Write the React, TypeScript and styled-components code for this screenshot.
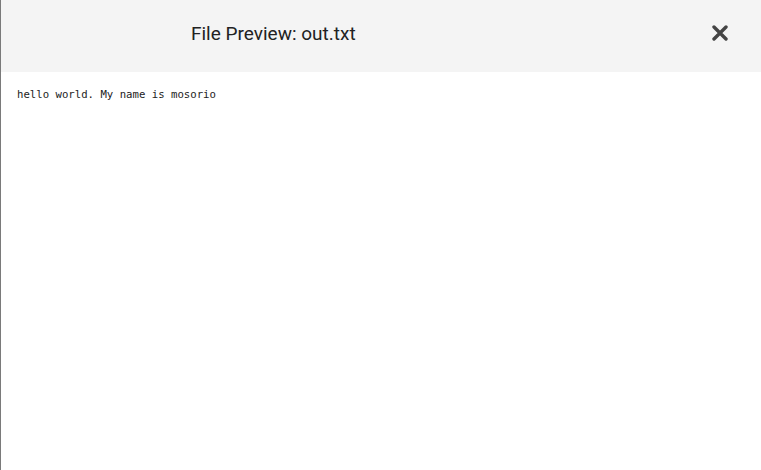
import React from 'react'
import styled, { createGlobalStyle } from 'styled-components'

const GlobalStyle = createGlobalStyle`
    html, body {
        margin: 0;
        padding: 0;
        background: white;
    }
`;

const Wrapper = styled.div`
    display: flex;
    flex-direction: column;
    height: 470px;
    width: 100%;
    box-sizing: border-box;
    border-left: 1px solid #7a7a7a;
    background: white;
`;

const Header = styled.div`
    display: flex;
    flex-direction: row;
    align-items: center;
    justify-content: space-between;
    height: 72px;
    box-sizing: border-box;
    flex-shrink: 0;
    background: #f4f4f4;
    padding: 0 32px 6px 190px;
`;

const Title = styled.h2`
    margin: 0;
    font-family: Roboto, 'Noto Sans', sans-serif;
    font-weight: 400;
    font-size: 19px;
    color: #222;
`;

const CloseButton = styled.button`
    display: flex;
    align-items: center;
    justify-content: center;
    width: 18px;
    height: 18px;
    padding: 0;
    border: none;
    background: transparent;
    cursor: pointer;
`;

const Content = styled.pre`
    margin: 0;
    padding: 16px 16px;
    font-family: 'DejaVu Sans Mono', monospace;
    font-size: 10.67px;
    color: #222;
`;

function App() {
    return (
        <>
            <GlobalStyle />
            <Wrapper>
                <Header>
                    <Title>File Preview: out.txt</Title>
                    <CloseButton aria-label="close">
                        <svg width="16" height="16" viewBox="0 0 16 16">
                            <path d="M2 2 L14 14 M14 2 L2 14" stroke="#444" strokeWidth="3.4" strokeLinecap="round" />
                        </svg>
                    </CloseButton>
                </Header>
                <Content>hello world. My name is mosorio</Content>
            </Wrapper>
        </>
    )
}

export default App
